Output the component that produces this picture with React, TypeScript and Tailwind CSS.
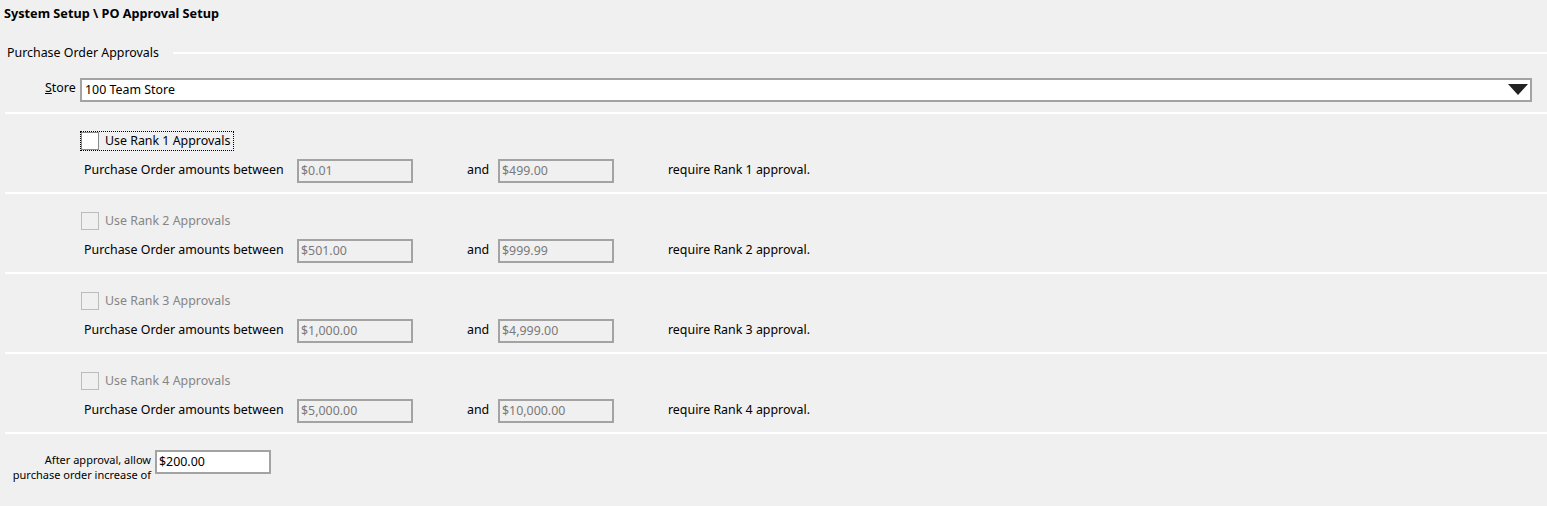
import React from 'react';

interface Rank {
  rank: number;
  from: string;
  to: string;
  enabled: boolean;
}

const ranks: Rank[] = [
  { rank: 1, from: '$0.01', to: '$499.00', enabled: true },
  { rank: 2, from: '$501.00', to: '$999.99', enabled: false },
  { rank: 3, from: '$1,000.00', to: '$4,999.00', enabled: false },
  { rank: 4, from: '$5,000.00', to: '$10,000.00', enabled: false },
];

const Separator = () => <div className="h-[2px] ml-[5px] bg-white" />;

const AmountBox = ({ value }: { value: string }) => (
  <div className="w-[116px] h-[24px] border-2 border-[#a3a3a3] bg-[#f0f0f0] flex items-center pl-[2px] text-[#7a7a7a]">
    {value}
  </div>
);

const RankSection = ({ r }: { r: Rank }) => (
  <div className="h-[78px] pt-[17px]">
    <div className="h-[20px] pl-[80px] flex items-center">
      <div
        className={
          r.enabled
            ? 'flex items-center h-[20px] pr-[3px] border border-dotted border-black'
            : 'flex items-center h-[20px] pr-[3px] border border-transparent'
        }
      >
        <div
          className={
            r.enabled
              ? 'w-[18px] h-[18px] bg-white border border-[#8a8a8a]'
              : 'w-[18px] h-[18px] bg-[#f0f0f0] border border-[#bcbcbc]'
          }
        />
        <span className={r.enabled ? 'ml-[6px] text-black' : 'ml-[6px] text-[#858585]'}>
          Use Rank {r.rank} Approvals
        </span>
      </div>
    </div>
    <div className="mt-[8px] h-[24px] flex items-center">
      <span className="ml-[84px] w-[213px] -mt-[2px]">Purchase Order amounts between</span>
      <AmountBox value={r.from} />
      <span className="ml-[54px] w-[31px] -mt-[2px]">and</span>
      <AmountBox value={r.to} />
      <span className="ml-[54px] -mt-[2px]">require Rank {r.rank} approval.</span>
    </div>
  </div>
);

export default function App() {
  return (
    <div
      className="w-[1547px] h-[506px] bg-[#f0f0f0] text-[12.4px] text-black overflow-hidden"
      style={{ fontFamily: '"Noto Sans", "Open Sans", sans-serif' }}
    >
      {/* Title */}
      <div className="h-[27px] flex items-center pl-[4px] font-bold text-[12.7px]">
        System Setup \ PO Approval Setup
      </div>

      {/* Group header */}
      <div className="mt-[14px] h-[25px] flex items-center">
        <span className="pl-[7px]">Purchase Order Approvals</span>
        <div className="flex-1 h-[2px] bg-white ml-[14px] -mt-[2px]" />
      </div>

      {/* Store */}
      <div className="mt-[12px] h-[24px] flex items-center">
        <span className="ml-[45px] w-[35px] -mt-[4px]">
          <span className="underline">S</span>tore
        </span>
        <div className="w-[1452px] h-[24px] border-2 border-[#a3a3a3] bg-white flex items-center justify-between pl-[3px] pr-[2px]">
          <span className="mt-[1px]">100 Team Store</span>
          <svg width="20" height="12" viewBox="0 0 20 12">
            <polygon points="0,0 20,0 10,11" fill="#222" />
          </svg>
        </div>
      </div>

      <div className="mt-[10px]">
        <Separator />
      </div>

      {ranks.map((r) => (
        <div key={r.rank}>
          <RankSection r={r} />
          <Separator />
        </div>
      ))}

      {/* Increase */}
      <div className="pt-[16px] flex items-start">
        <div className="w-[151px] pt-[2px] text-right leading-[15px] text-[11px]">
          After approval, allow
          <br />
          purchase order increase of
        </div>
        <div className="ml-[4px] w-[116px] h-[24px] border-2 border-[#a3a3a3] bg-white flex items-center pl-[2px]">
          $200.00
        </div>
      </div>
    </div>
  );
}
